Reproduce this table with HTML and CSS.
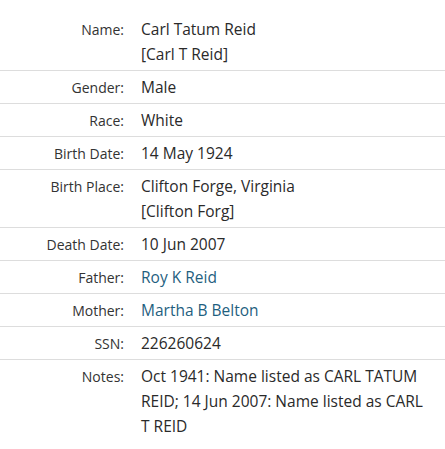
FILE: index.html
```html
<!DOCTYPE html>
<html>
<head>
<meta charset="utf-8">
<link rel="stylesheet" href="styles.css">
</head>
<body>
<div class="record">
  <div class="row"><div class="label">Name:</div><div class="value">Carl Tatum Reid<br>[Carl T Reid]</div></div>
  <div class="row"><div class="label">Gender:</div><div class="value">Male</div></div>
  <div class="row"><div class="label">Race:</div><div class="value">White</div></div>
  <div class="row"><div class="label">Birth Date:</div><div class="value">14 May 1924</div></div>
  <div class="row"><div class="label">Birth Place:</div><div class="value">Clifton Forge, Virginia<br>[Clifton Forg]</div></div>
  <div class="row"><div class="label">Death Date:</div><div class="value">10 Jun 2007</div></div>
  <div class="row"><div class="label">Father:</div><div class="value"><a class="link" href="#">Roy K Reid</a></div></div>
  <div class="row"><div class="label">Mother:</div><div class="value"><a class="link" href="#">Martha B Belton</a></div></div>
  <div class="row"><div class="label">SSN:</div><div class="value">226260624</div></div>
  <div class="row last"><div class="label">Notes:</div><div class="value">Oct 1941: Name listed as CARL TATUM REID; 14 Jun 2007: Name listed as CARL T REID</div></div>
</div>
</body>
</html>
```
FILE: styles.css
```css
html, body {
  margin: 0;
  padding: 0;
  background: #fff;
}
body {
  font-family: "Open Sans", "Lato", sans-serif;
  color: #2a2a2a;
}
.record {
  padding-top: 13px;
}
.row {
  display: grid;
  grid-template-columns: 124px 1fr;
  column-gap: 17px;
  padding: 4px 0 3px;
  border-bottom: 1px solid #ddd;
  line-height: 25px;
}
.row.last {
  border-bottom: none;
}
.label {
  text-align: right;
  font-size: 14px;
  color: #333;
}
.value {
  font-size: 15.5px;
  color: #2a2a2a;
  padding-right: 14px;
}
.link {
  color: #1f5f7f;
  text-decoration: none;
}
```
